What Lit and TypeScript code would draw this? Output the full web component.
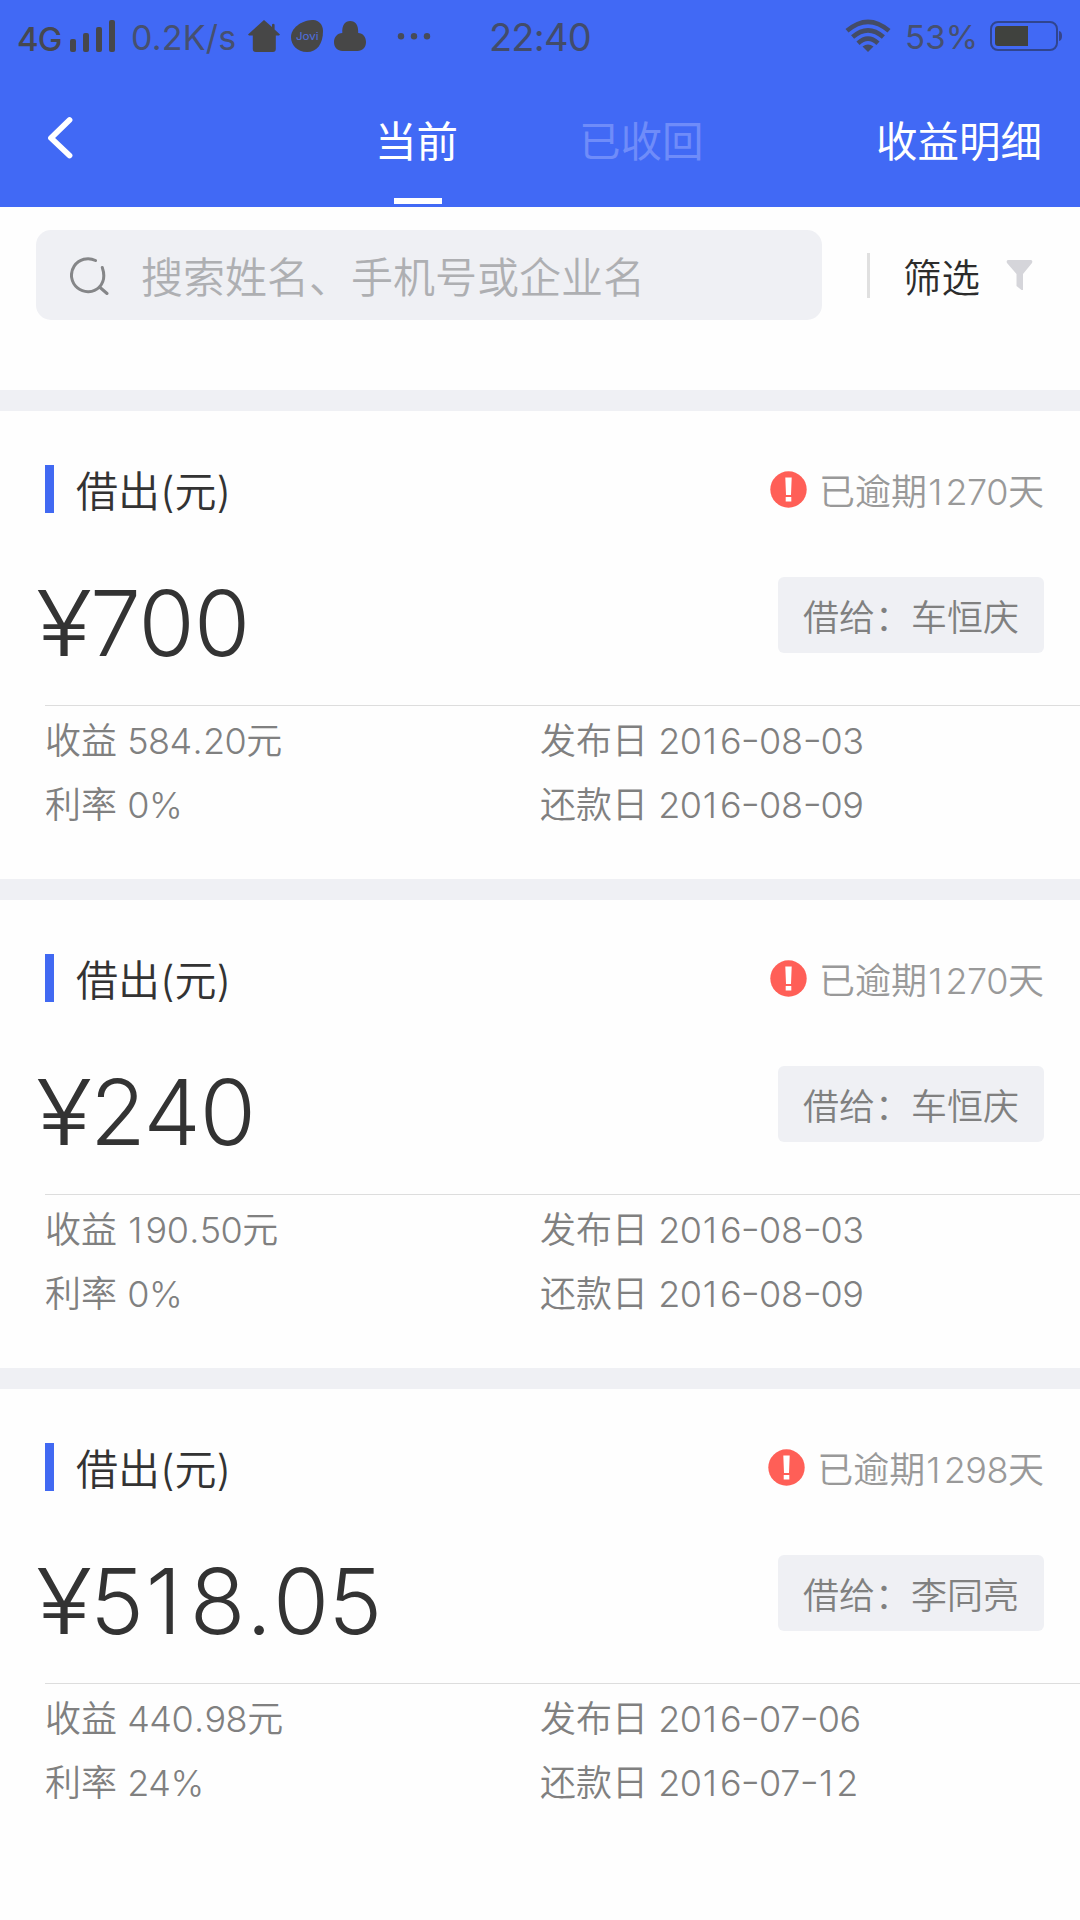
import { LitElement, html, css } from "lit";
import { customElement, property } from "lit/decorators.js";

interface Loan {
  amount: string;
  overdue: string;
  borrower: string;
  profit: string;
  rate: string;
  issued: string;
  due: string;
}

const LOANS: Loan[] = [
  { amount: "700", overdue: "1270", borrower: "车恒庆", profit: "584.20", rate: "0%", issued: "2016-08-03", due: "2016-08-09" },
  { amount: "240", overdue: "1270", borrower: "车恒庆", profit: "190.50", rate: "0%", issued: "2016-08-03", due: "2016-08-09" },
  { amount: "518.05", overdue: "1298", borrower: "李同亮", profit: "440.98", rate: "24%", issued: "2016-07-06", due: "2016-07-12" },
];

const GLYPH_CLASS: Record<string, string> = { "1": "one", ".": "point", "-": "dash" };
const figures = (text: string) =>
  text
    .split(/([1.\-])/)
    .filter((part) => part !== "")
    .map((part) => (GLYPH_CLASS[part] ? html`<span class=${GLYPH_CLASS[part]}>${part}</span>` : part));

@customElement("status-bar")
class StatusBar extends LitElement {
  static styles = css`
    :host { display: block; color: #46484f; }
    .bar { display: flex; align-items: center; height: 72px; box-sizing: border-box; padding-left: 17px; }
    .bar > * { flex: none; }
    .network { width: 53px; font-size: 33px; font-weight: 500; line-height: 40px; margin-top: 6px; letter-spacing: -1px; }
    .speed { width: 117px; margin-left: 16px; font-size: 34px; line-height: 40px; margin-top: 3px; color: #46506f; white-space: nowrap; letter-spacing: 0.2px; }
    .time { width: 110px; margin-left: 58px; font-size: 38px; letter-spacing: -0.8px; line-height: 44px; margin-top: 2px; color: #424c6a; }
    .wifi { margin-left: 246px; }
    .percent { width: 85px; margin-left: 14px; font-size: 33px; line-height: 40px; margin-top: 2px; color: #46506f; letter-spacing: 0.2px; }
    svg { display: block; }
    .jovi { margin-left: 11px; }
    .cloud { margin-left: 11px; }
    .dots { margin-left: 31px; }
  `;
  render() {
    return html`<div class="bar">
      <span class="network">4G</span>
      <svg width="45" height="32" viewBox="0 0 45 32" fill="#46474b">
        <rect x="0" y="19" width="6" height="13" rx="2" /><rect x="13" y="13" width="6" height="19" rx="2" />
        <rect x="26" y="7" width="6" height="25" rx="2" /><rect x="39" y="0" width="6" height="32" rx="2" />
      </svg>
      <span class="speed">0.2K/s</span>
      <svg class="house" width="32" height="32" viewBox="0 0 32 32" fill="#474747">
        <path d="M16 0 L24 7 V4.5 Q25.3 3 26.6 4.5 V9.6 L32 14.5 L31 15.6 H27.8 V29 Q27.8 32 24.8 32 H7.8 Q4.8 32 4.8 29 V15.6 H1 L0 14.5 Z" />
      </svg>
      <svg class="jovi" width="32" height="32" viewBox="0 0 32 32">
        <path fill="#474747" d="M21 0 C27 -.4 32 4 32 11 C32 24 26 32 16 32 C6 32 0 25 0 17 C0 8 10 .8 21 0 Z" />
        <text x="5" y="20" font-size="10" textLength="22.5" lengthAdjust="spacingAndGlyphs" fill="#4f70e0">Jovi</text>
      </svg>
      <svg class="cloud" width="32" height="32" viewBox="0 0 32 32" fill="#474747">
        <path d="M8.3 13 C7.8 5 11 1 16.2 1 C21.5 1 24.6 5 24.2 13 C29 13 32 17 32 22 C32 27.5 28.5 31 23.5 31 H8.5 C3.5 31 0 27.5 0 22 C0 17 3.5 13 8.3 13 Z" />
      </svg>
      <svg class="dots" width="34" height="8" viewBox="0 0 34 8" fill="#474b58">
        <circle cx="4" cy="4.2" r="3.2" /><circle cx="17" cy="4.2" r="3.2" /><circle cx="30" cy="4.2" r="3.2" />
      </svg>
      <span class="time">22:40</span>
      <svg class="wifi" width="46" height="34" viewBox="0 0 46 34" fill="none" stroke="#444c66" stroke-width="4.6">
        <path d="M2 11.8 Q23 -6.2 44 11.8" /><path d="M7.6 18 Q23 4.6 38.4 18" /><path d="M13 24.2 Q23 15 33 24.2" />
        <path d="M17.5 27.6 Q23 23.6 28.5 27.6 L23 33 Z" fill="#444c66" stroke="none" />
      </svg>
      <span class="percent">53%</span>
      <svg width="73" height="30" viewBox="0 0 73 30">
        <rect x="1" y="1" width="66" height="28" rx="7" fill="none" stroke="#30458f" stroke-width="2" />
        <path d="M8 5 H38 V25 H8 Q5 25 5 22 V8 Q5 5 8 5 Z" fill="#40423e" />
        <path d="M69 10 Q72 10.500 72 15 Q72 19.500 69 20 Z" fill="#35448a" />
      </svg>
    </div>`;
  }
}

@customElement("loan-card")
class LoanCard extends LitElement {
  @property({ attribute: false }) loan!: Loan;
  static styles = css`
    :host { display: block; }
    .card { border-top: 21px solid #eff0f4; height: 468px; background: #fefefe; }
    .head { display: flex; align-items: center; height: 48px; padding: 54px 36px 0 45px; }
    .mark { width: 9px; height: 48px; background: #4169f2; }
    .title { flex: 1; margin: 6px 0 0 22px; font-size: 42px; line-height: 48px; color: #333; font-weight: 350; }
    .overdue { display: flex; align-items: center; font-size: 36px; line-height: 44px; color: #999; font-weight: 350; }
    .overdue svg { margin-right: 12px; }
    .overdue .days { margin-top: 6px; }
    .middle { display: flex; justify-content: space-between; align-items: center; height: 76px; padding: 64px 36px 52px 37px; }
    .amount { display: flex; font-size: 91px; line-height: 100px; margin-top: 16px; color: #333; font-weight: 300; }
    .yen { width: 54px; transform: scaleX(1.14); transform-origin: left; margin-left: -1px; }
    .value { letter-spacing: -0.01em; }
    .num { font-feature-settings: "case"; letter-spacing: -0.013em; font-weight: 300; }
    .one { margin: 0 0.1em 0 0.03em; }
    .point { margin: 0 0.02em; }
    .dash { display: inline-block; transform: scaleX(1.2); margin: 0 0.03em; }
    .tag { box-sizing: border-box; width: 266px; height: 76px; padding: 5px 0 0 25px; border-radius: 6px; background: #eff0f4;
      font-size: 36px; line-height: 72px; color: #808080; font-weight: 350; white-space: nowrap; }
    .facts { display: grid; grid-template-columns: 495px 1fr; grid-auto-rows: 64px; margin-left: 45px; padding-top: 3px;
      border-top: 1px solid #ddd; font-size: 36px; line-height: 64px; color: #808080; font-weight: 350; }
    svg { display: block; }
  `;
  render() {
    const l = this.loan;
    return html`<section class="card">
      <div class="head">
        <div class="mark"></div>
        <div class="title">借出(元)</div>
        <div class="overdue">
          <svg width="37" height="37" viewBox="0 0 37 37">
            <circle cx="18.500" cy="18.500" r="18.200" fill="#ff5f57" />
            <path d="M15.300 6.500 H21.700 L21 24 H16 Z M15.700 26 H21.300 V30.500 H15.700 Z" fill="#fff" />
          </svg>
          <span class="days">已逾期<span class="num">${figures(l.overdue)}</span>天</span>
        </div>
      </div>
      <div class="middle">
        <div class="amount"><span class="yen">¥</span><span class="value">${figures(l.amount)}</span></div>
        <div class="tag">借给：${l.borrower}</div>
      </div>
      <div class="facts">
        <span>收益 <span class="num">${figures(l.profit)}</span>元</span><span>发布日 <span class="num">${figures(l.issued)}</span></span>
        <span>利率 <span class="num">${figures(l.rate)}</span></span><span>还款日 <span class="num">${figures(l.due)}</span></span>
      </div>
    </section>`;
  }
}

@customElement("app-root")
class AppRoot extends LitElement {
  static styles = css`
    :host { display: block; width: 1080px; height: 1920px; overflow: hidden; background: #fefefe;
      font-family: Inter, "Noto Sans CJK SC", sans-serif; }
    .top { background: #4169f5; height: 207px; }
    .nav { display: flex; height: 135px; font-size: 41.5px; line-height: 60px; font-weight: 400; color: #fff; padding-left: 47px; }
    .nav > * { flex: none; }
    .back { margin-top: 44px; display: block; }
    .tab { margin-top: 40px; }
    .current { margin-left: 302px; width: 84px; height: 92px; display: flex; flex-direction: column; justify-content: space-between; white-space: nowrap; }
    .line { width: 48px; height: 6px; margin-left: 19px; background: #fff; }
    .returned { margin-left: 120px; width: 126px; color: #6f8cf9; white-space: nowrap; }
    .detail { margin-left: 171px; white-space: nowrap; }
    .search { display: flex; align-items: center; height: 90px; padding: 23px 0 70px 36px; }
    .box { width: 786px; height: 90px; box-sizing: border-box; border-radius: 15px; background: #eff0f4; display: flex; align-items: center; padding-left: 34px; }
    .hint { margin: 6px 0 0 32px; font-size: 42px; line-height: 60px; font-weight: 350; color: #aeafb2; }
    .rule { width: 3px; height: 45px; background: #e0e0e0; margin-left: 45px; }
    .filter { margin: 5px 0 0 33px; font-size: 38.500px; line-height: 60px; font-weight: 350; color: #2c2c2c; }
    .funnel { margin-left: 26px; }
  `;
  render() {
    return html`
      <header class="top">
        <status-bar></status-bar>
        <nav class="nav">
          <svg class="back" width="26" height="44" viewBox="0 0 26 44" fill="none" stroke="#fff" stroke-width="5.8" stroke-linecap="round" stroke-linejoin="round">
            <path d="M22.500 4 L4 22 L22.500 39.500" />
          </svg>
          <div class="tab current"><span>当前</span><div class="line"></div></div>
          <div class="tab returned">已收回</div>
          <div class="tab detail">收益明细</div>
        </nav>
      </header>
      <div class="search">
        <div class="box">
          <svg width="39" height="39" viewBox="0 0 39 39" fill="none" stroke="#858688" stroke-width="3" stroke-linecap="round">
            <path d="M25.500 4.500 A16.500 16.500 0 1 0 29.500 31 C34.500 25.500 34.500 18 32.300 11.500" />
            <path d="M29.500 31 L37 37.500" />
          </svg>
          <span class="hint">搜索姓名、手机号或企业名</span>
        </div>
        <div class="rule"></div>
        <span class="filter">筛选</span>
        <svg class="funnel" width="27" height="32" viewBox="0 0 27 32" fill="#d5d5da">
          <path d="M2 1 H25 Q27 1.500 26 4 L17 15 V31 H15.500 L10.500 27 V15 L1 4 Q0 1.500 2 1 Z" />
        </svg>
      </div>
      ${LOANS.map((loan) => html`<loan-card .loan=${loan}></loan-card>`)}
    `;
  }
}
